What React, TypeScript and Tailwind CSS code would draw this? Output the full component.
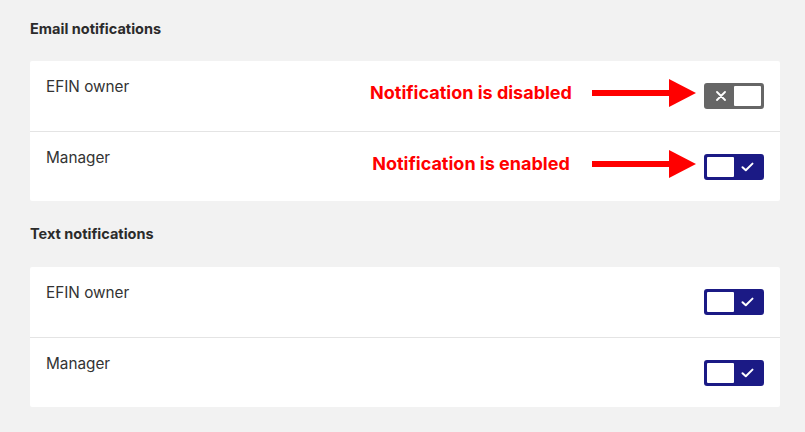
import React from "react";

function Toggle({ on }: { on: boolean }) {
  if (on) {
    return (
      <div className="flex h-[26px] w-[60px] shrink-0 items-center rounded-[3px] bg-[#1b1a85] p-[3px]">
        <div className="h-[20px] w-[27px] rounded-[1px] bg-white" />
        <div className="flex flex-1 items-center justify-center">
          <svg width="13" height="10" viewBox="0 0 13 10" fill="none">
            <path d="M1.5 5.2 L4.8 8.3 L11.5 1.6" stroke="white" strokeWidth="2" strokeLinecap="round" strokeLinejoin="round" />
          </svg>
        </div>
      </div>
    );
  }
  return (
    <div className="flex h-[26px] w-[60px] shrink-0 items-center rounded-[3px] bg-[#666666] p-[3px]">
      <div className="flex flex-1 items-center justify-center">
        <svg width="10" height="10" viewBox="0 0 10 10" fill="none">
          <path d="M1 1 L9 9 M9 1 L1 9" stroke="white" strokeWidth="1.8" strokeLinecap="round" />
        </svg>
      </div>
      <div className="h-[20px] w-[27px] rounded-[1px] bg-white" />
    </div>
  );
}

function Arrow() {
  return (
    <svg width="105" height="28" viewBox="0 0 105 28" className="shrink-0">
      <rect x="0" y="11" width="80" height="6" fill="#ff0000" />
      <polygon points="77,0 104,14 77,28" fill="#ff0000" />
    </svg>
  );
}

function Row({
  label,
  on,
  note,
  divider,
}: {
  label: string;
  on: boolean;
  note?: string;
  divider?: boolean;
}) {
  return (
    <div className={`flex h-[70px] pl-4 pr-4 ${divider ? "border-t border-[#e4e4e4]" : ""}`}>
      <div className="pt-[16px] text-[15.3px] leading-5 text-[#333333]">{label}</div>
      <div className="ml-auto flex items-center">
        {note && (
          <div className="mb-[6px] flex items-center">
            <div className="w-[240px] text-center text-[18px] font-bold leading-6 text-[#ff0000]">{note}</div>
            <div className="ml-[1px] mr-[7px] flex items-center">
              <Arrow />
            </div>
          </div>
        )}
        <Toggle on={on} />
      </div>
    </div>
  );
}

export default function App() {
  return (
    <div
      className="min-h-[432px] w-full bg-[#f2f2f2] pl-[30px] pr-[25px] pt-[19px]"
      style={{ fontFamily: "Inter, 'Noto Sans', sans-serif" }}
    >
      <div className="text-[14.5px] font-bold leading-5 text-[#2b2b2b]">Email notifications</div>
      <div className="mt-[22px] rounded-[2px] bg-white">
        <Row label="EFIN owner" on={false} note="Notification is disabled" />
        <Row label="Manager" on={true} note="Notification is enabled" divider />
      </div>
      <div className="mt-[23px] text-[14.5px] font-bold leading-5 text-[#2b2b2b]">Text notifications</div>
      <div className="mt-[23px] rounded-[2px] bg-white">
        <Row label="EFIN owner" on={true} />
        <Row label="Manager" on={true} divider />
      </div>
    </div>
  );
}
